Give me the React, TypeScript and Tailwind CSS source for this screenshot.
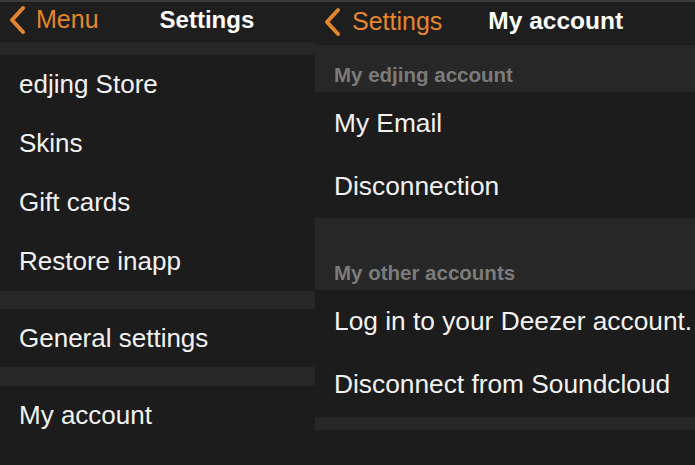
const font = "font-['Liberation_Sans',Arial,sans-serif]";

function Chevron() {
  return (
    <svg width="20" height="30" viewBox="0 0 20 30" className="shrink-0">
      <path d="M15 3 L4 15 L15 27" fill="none" stroke="#e4862b" strokeWidth="4" strokeLinecap="round" strokeLinejoin="round" />
    </svg>
  );
}

function Row({ label, h, size }: { label: string; h: string; size: string }) {
  return (
    <div className={`${h} ${size} flex items-center pl-[19px] text-[#f2f2f2] whitespace-nowrap`}>
      {label}
    </div>
  );
}

function Band({ h, label }: { h: string; label?: string }) {
  return (
    <div className={`${h} bg-[#272727] flex items-end pl-[19px] pb-[1px]`}>
      {label && <span className="text-[20.5px] font-bold text-[#7b7b7b] whitespace-nowrap">{label}</span>}
    </div>
  );
}

export default function App() {
  return (
    <div className={`${font} w-[695px] h-[465px] overflow-hidden bg-[#1c1c1c] flex border-t-2 border-[#3a3a3a]`}>
      {/* left screen */}
      <div className="w-[315px] shrink-0 flex flex-col">
        <div className="h-[40px] bg-[#1e1e1e] flex items-center pl-[8px] pb-[4px]">
          <Chevron />
          <span className="ml-[8px] text-[25px] text-[#e4862b]">Menu</span>
          <span className="ml-[61px] text-[24px] font-bold text-white">Settings</span>
        </div>
        <Band h="h-[13px]" />
        <Row label="edjing Store" h="h-[59px]" size="text-[26px]" />
        <Row label="Skins" h="h-[59px]" size="text-[26px]" />
        <Row label="Gift cards" h="h-[59px]" size="text-[26px]" />
        <Row label="Restore inapp" h="h-[59px]" size="text-[26px]" />
        <Band h="h-[18px]" />
        <Row label="General settings" h="h-[58px]" size="text-[26px]" />
        <Band h="h-[19px]" />
        <Row label="My account" h="h-[59px]" size="text-[26px]" />
      </div>

      {/* right screen */}
      <div className="flex-1 min-w-0 flex flex-col">
        <div className="h-[43px] bg-[#1e1e1e] flex items-center pl-[8px] pb-[4px]">
          <Chevron />
          <span className="ml-[9px] text-[25px] text-[#e4862b]">Settings</span>
          <span className="ml-[46px] text-[24.5px] font-bold text-white">My account</span>
        </div>
        <Band h="h-[47px]" label="My edjing account" />
        <Row label="My Email" h="h-[63px]" size="text-[26.3px]" />
        <Row label="Disconnection" h="h-[63px]" size="text-[26.3px]" />
        <Band h="h-[72px]" label="My other accounts" />
        <Row label="Log in to your Deezer account." h="h-[63px]" size="text-[26.3px]" />
        <Row label="Disconnect from Soundcloud" h="h-[64px]" size="text-[26.3px]" />
        <Band h="h-[13px]" />
      </div>
    </div>
  );
}
